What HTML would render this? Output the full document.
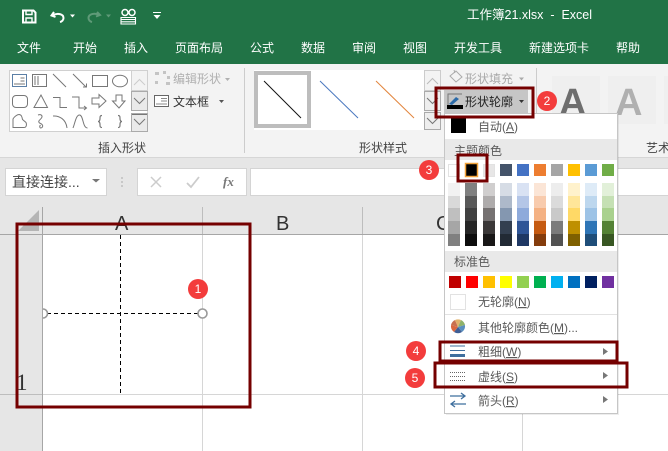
<!DOCTYPE html>
<html><head><meta charset="utf-8"><style>
html,body{margin:0;padding:0;background:#fff;width:668px;height:451px;overflow:hidden}
svg{display:block}
text{font-family:"Liberation Sans","Noto Sans CJK SC",sans-serif;font-size:12px;fill:#444}
.t text{fill:#fff}
.i{fill:none;stroke:#777;stroke-width:1}
</style></head><body>
<svg width="668" height="451" viewBox="0 0 668 451" xmlns="http://www.w3.org/2000/svg">
<rect width="668" height="451" fill="#fff"/>
<rect width="668" height="64" fill="#217346"/>
<rect y="64" width="668" height="93" fill="#f3f3f3"/>
<rect y="157" width="668" height="50" fill="#e6e6e6"/>
<rect y="157" width="668" height="1" fill="#d6d6d6"/>
<rect y="207" width="668" height="27" fill="#e6e6e6"/>
<rect y="207" width="42" height="244" fill="#e6e6e6"/>
<!-- QAT -->
<g fill="none" stroke="#fff">
<path d="M23 10.500h10.500l2 2V22.500H23z" stroke-width="2"/>
<path d="M26 11v3.500h6V11M26 22v-4h6v4" stroke-width="1.400"/>
<path d="M54 12l-2.500 3.500 4 1.500M52.500 15.500c5-3 11-1.500 11 2.500 0 2-1.500 3.500-3.500 4" stroke-width="2"/>
<path d="M97 12l3 3-4 1.500M99.500 15c-5-2.500-11-1-11 3 0 2 1.500 3.500 3.500 4" stroke="#5f9a78" stroke-width="2"/>
<path d="M121 17.500h14.500V24H121zM121 19.500h14M121 21.800h14" stroke-width="1.100"/>
<circle cx="125" cy="12.500" r="3" stroke-width="1.500"/><circle cx="132" cy="12.500" r="3" stroke-width="1.500"/>
<path d="M153 12.500h8" stroke-width="1"/>
</g>
<path d="M70 14.500h5l-2.500 3zM153.500 15h7l-3.500 4z" fill="#fff"/>
<path d="M106 14.500h5l-2.500 3z" fill="#5f9a78"/>
<g class="t">
<text x="467" y="19" style="font-size:12.500px">工作簿21.xlsx &#160;- &#160;Excel</text>
<text x="17" y="52">文件</text><text x="73" y="52">开始</text><text x="124" y="52">插入</text>
<text x="175" y="52">页面布局</text><text x="250" y="52">公式</text><text x="301" y="52">数据</text>
<text x="352" y="52">审阅</text><text x="403" y="52">视图</text><text x="454" y="52">开发工具</text>
<text x="529" y="52">新建选项卡</text><text x="616" y="52">帮助</text>
</g>
<!-- Insert-shape gallery -->
<rect x="9.500" y="70.500" width="138" height="61" fill="#fff" stroke="#d0d0d0"/>
<rect x="131.500" y="70.500" width="16" height="20" fill="#f3f3f3" stroke="#d0d0d0"/>
<rect x="131.500" y="91.500" width="16" height="19" fill="#eaeaea" stroke="#aaa"/>
<rect x="131.500" y="113.500" width="16" height="18" fill="#eaeaea" stroke="#aaa"/>
<path class="i" d="M134 85l5.500-5.500 5.500 5.500" style="stroke:#ccc"/>
<path class="i" d="M134 98l5.500 5.500 5.500-5.500M132 114.500h15M134 119l5.500 5.500 5.500-5.500"/>
<g class="i">
<rect x="12.500" y="74.500" width="14" height="12" style="stroke:#5b7fa6"/>
<path d="M20.500 78h4M20.500 81h4M14 84h11"/>
<rect x="32.500" y="74.500" width="14" height="12"/>
<path d="M35 76v9M38 76v9"/>
<path d="M53 74l13 13M73 74l13 13M83 87h3.500v-3.500"/>
<rect x="92.500" y="75.500" width="15" height="11"/>
<ellipse cx="120" cy="81" rx="7.500" ry="5.800"/>
<rect x="12.500" y="95.500" width="15" height="12" rx="3.500"/>
<path d="M41 95l-7 12.500h13.500z"/>
<path d="M53 97.500h7v10h7"/>
<path d="M72 97h7v11h7M84 106l2.500 2-2.500 2"/>
<path d="M92 98h7v-3.500l7 6.500-7 6.500V104h-7z"/>
<path d="M116 95h6v6h3l-6 7-6.500-7h3.500z"/>
<path d="M13 127.500v-8.500c1-2 4-4.500 6-4.500 2.500 0 3 2.500 3.500 5l3.500 3c1 2 .5 5-2 5z"/>
<path d="M38 115c3-1 5 .5 3.500 3-1.500 2-4 3-2 5 3 1 4 3 2.500 4.500-2 1.500-3-1-1.500-2.500"/>
<path d="M53 116c6-.5 13 3 14 12"/>
<path d="M73 128c2-5 3-13 6.500-13 4 0 3 13 8 13"/>
<path d="M102 115.500c-2 0-2 1-2 3 0 1.500-.5 3-2 3 1.500 0 2 1.500 2 3 0 2 0 3 2 3" stroke-width="1.200"/>
<path d="M118 115.500c2 0 2 1 2 3 0 1.500.5 3 2 3-1.500 0-2 1.500-2 3 0 2 0 3-2 3" stroke-width="1.200"/>
</g>
<!-- edit / text box -->
<g fill="#c4c4c4"><rect x="155" y="72" width="4" height="3"/><rect x="163" y="71" width="3" height="3"/><rect x="167" y="76" width="3" height="3"/><rect x="155" y="81" width="3" height="3"/><rect x="166" y="82" width="4" height="3"/></g>
<text x="173" y="83" style="fill:#b0b0b0">编辑形状</text><path d="M225 78h5l-2.500 3z" fill="#b0b0b0"/>
<rect x="154.500" y="95.500" width="14" height="11" fill="#fff" stroke="#666"/>
<path d="M161 98.500h6M161 101h6M156 104h11" stroke="#888" fill="none"/>
<text x="173" y="106" style="fill:#333">文本框</text><path d="M219 100h5l-2.500 3z" fill="#555"/>
<text x="98" y="152">插入形状</text>
<rect x="244" y="68" width="1" height="85" fill="#ccc"/>
<!-- Shape style gallery -->
<rect x="254" y="70" width="170" height="60" fill="#fff"/>
<rect x="256" y="73" width="53" height="53" fill="#fff" stroke="#bdbdbd" stroke-width="4"/>
<path d="M264 81l37 37" stroke="#111" fill="none"/>
<path d="M320 81l38 37" stroke="#4a78bf" fill="none"/>
<path d="M376 81l38 37" stroke="#e2853d" fill="none"/>
<rect x="424.500" y="70.500" width="16" height="20" fill="#f3f3f3" stroke="#ccc"/>
<rect x="424.500" y="91.500" width="16" height="19" fill="#eee" stroke="#aaa"/>
<rect x="424.500" y="112.500" width="16" height="17" fill="#eee" stroke="#aaa"/>
<path class="i" d="M427 84l5.500-5.500 5.500 5.500" style="stroke:#bbb"/>
<path class="i" d="M427 98l5.500 5.500 5.500-5.500M427 118l5.500 5.500 5.500-5.500"/>
<text x="359" y="152">形状样式</text>
<text x="465" y="83" style="fill:#aaa">形状填充</text><path d="M519 77.500h5l-2.500 3z" fill="#aaa"/>
<path d="M450 76l6-5 6 6-6 5zM454 70l1 3" stroke="#aaa" fill="none"/>
<rect x="444" y="90" width="84" height="24" fill="#c6c6c6"/>
<path d="M448 106V94h14" stroke="#777" fill="none"/><path d="M449 104l7-7 3 2-7 6z" fill="#2b6aa8"/>
<rect x="447" y="105" width="16" height="4" fill="#000"/>
<text x="465" y="106" style="fill:#222">形状轮廓</text><path d="M519 100h5l-2.500 3z" fill="#333"/>
<rect x="536" y="68" width="1" height="85" fill="#ccc"/>
<!-- WordArt -->
<rect x="552" y="76" width="48" height="48" fill="#efefef"/><rect x="608" y="76" width="48" height="48" fill="#efefef"/><rect x="664" y="76" width="4" height="48" fill="#efefef"/>
<text x="559" y="115" style="font-size:38px;fill:#6e6e6e;font-weight:bold">A</text>
<text x="615" y="115" style="font-size:38px;fill:#b0b0b0;font-weight:bold">A</text>
<text x="646" y="152" style="fill:#444">艺术</text>
<!-- Formula bar -->
<rect x="5.500" y="168.500" width="101" height="27" fill="#fff" stroke="#d4d4d4"/>
<text x="12" y="187" style="font-size:14px;fill:#444">直接连接...</text><path d="M92 179h8l-4 3.500z" fill="#777"/>
<path d="M122 177v2M122 181v2M122 185v2" stroke="#aaa" fill="none"/>
<rect x="137.500" y="168.500" width="109" height="27" fill="#fff" stroke="#d4d4d4"/>
<path d="M151 177l10 10M161 177l-10 10" stroke="#ccc" stroke-width="1.500" fill="none"/>
<path d="M187 183l4 4 8-10" stroke="#ccc" stroke-width="1.800" fill="none"/>
<text x="223" y="186" style="font-family:'Liberation Serif',serif;font-size:13px;font-style:italic;font-weight:bold;fill:#777">fx</text>
<rect x="250.500" y="168.500" width="420" height="27" fill="#fff" stroke="#d4d4d4"/>
<!-- Sheet -->
<path d="M39 210v21H18z" fill="#b5b5b5"/>
<path d="M42.500 207V451" stroke="#a6a6a6" fill="none"/>
<path d="M202.500 207v27M362.500 207v27M522.500 207v27" stroke="#bdbdbd" fill="none"/>
<path d="M0 234.500H668" stroke="#a6a6a6" fill="none"/>
<path d="M202.500 235V451M362.500 235V451M522.500 235V451M43 394.500H668" stroke="#d6d6d6" fill="none"/>
<path d="M0 394.500H42" stroke="#bdbdbd" fill="none"/>
<text x="115" y="230" style="font-size:20px;fill:#333">A</text>
<text x="276" y="230" style="font-size:20px;fill:#333">B</text>
<text x="436" y="230" style="font-size:20px;fill:#333">C</text>
<text x="16" y="390" style="font-family:'Liberation Serif',serif;font-size:23px;fill:#333">1</text>
<path d="M120.500 235V394" stroke="#000" stroke-dasharray="4 3" fill="none"/>
<path d="M47 313.500H198" stroke="#000" stroke-dasharray="4 3" fill="none"/>
<circle cx="202.500" cy="313.500" r="4.500" fill="#fff" stroke="#999" stroke-width="1.600"/>
<path d="M43 309a4.500 4.500 0 0 1 0 9" fill="#fff" stroke="#999" stroke-width="1.600"/>
<!-- Menu -->
<rect x="446" y="115" width="173" height="300" fill="#000" opacity=".07"/>
<rect x="444.500" y="113.500" width="173" height="300" fill="#fff" stroke="#c6c6c6"/>
<rect x="451" y="118" width="15" height="15" fill="#000"/>
<text x="478" y="131" style="fill:#5a5a5a">自动(<tspan text-decoration="underline">A</tspan>)</text>
<rect x="445" y="139" width="172" height="21" fill="#e9e9e9"/>
<text x="454" y="155" style="fill:#5a5a5a">主题颜色</text>
<g stroke="#e2e2e2"><rect x="448.500" y="164.500" width="11" height="12" fill="#fff"/>
<rect x="483.500" y="164.500" width="11" height="12" fill="#e7e6e6"/></g>
<rect x="465.500" y="163.500" width="12" height="13" fill="#000" stroke="#f2a33a" stroke-width="1.500"/>
<rect x="500" y="164" width="12" height="12" fill="#44546a"/><rect x="517" y="164" width="12" height="12" fill="#4472c4"/>
<rect x="534" y="164" width="12" height="12" fill="#ed7d31"/><rect x="551" y="164" width="12" height="12" fill="#a5a5a5"/>
<rect x="568" y="164" width="12" height="12" fill="#ffc000"/><rect x="585" y="164" width="12" height="12" fill="#5b9bd5"/>
<rect x="602" y="164" width="12" height="12" fill="#70ad47"/>
<g>
<rect x="448" y="183" width="12" height="13" fill="#f2f2f2"/><rect x="448" y="196" width="12" height="12" fill="#d9d9d9"/><rect x="448" y="208" width="12" height="13" fill="#bfbfbf"/><rect x="448" y="221" width="12" height="13" fill="#a6a6a6"/><rect x="448" y="234" width="12" height="12" fill="#808080"/>
<rect x="465" y="183" width="12" height="13" fill="#808080"/><rect x="465" y="196" width="12" height="12" fill="#595959"/><rect x="465" y="208" width="12" height="13" fill="#404040"/><rect x="465" y="221" width="12" height="13" fill="#262626"/><rect x="465" y="234" width="12" height="12" fill="#0d0d0d"/>
<rect x="483" y="183" width="12" height="13" fill="#d0cece"/><rect x="483" y="196" width="12" height="12" fill="#aeabab"/><rect x="483" y="208" width="12" height="13" fill="#757171"/><rect x="483" y="221" width="12" height="13" fill="#3b3838"/><rect x="483" y="234" width="12" height="12" fill="#181717"/>
<rect x="500" y="183" width="12" height="13" fill="#d6dce5"/><rect x="500" y="196" width="12" height="12" fill="#adb9ca"/><rect x="500" y="208" width="12" height="13" fill="#8497b0"/><rect x="500" y="221" width="12" height="13" fill="#333f50"/><rect x="500" y="234" width="12" height="12" fill="#222a35"/>
<rect x="517" y="183" width="12" height="13" fill="#d9e2f3"/><rect x="517" y="196" width="12" height="12" fill="#b4c6e7"/><rect x="517" y="208" width="12" height="13" fill="#8eaadb"/><rect x="517" y="221" width="12" height="13" fill="#2f5597"/><rect x="517" y="234" width="12" height="12" fill="#1f3864"/>
<rect x="534" y="183" width="12" height="13" fill="#fbe5d6"/><rect x="534" y="196" width="12" height="12" fill="#f8cbad"/><rect x="534" y="208" width="12" height="13" fill="#f4b183"/><rect x="534" y="221" width="12" height="13" fill="#c55a11"/><rect x="534" y="234" width="12" height="12" fill="#843c0c"/>
<rect x="551" y="183" width="12" height="13" fill="#ededed"/><rect x="551" y="196" width="12" height="12" fill="#dbdbdb"/><rect x="551" y="208" width="12" height="13" fill="#c9c9c9"/><rect x="551" y="221" width="12" height="13" fill="#7b7b7b"/><rect x="551" y="234" width="12" height="12" fill="#525252"/>
<rect x="568" y="183" width="12" height="13" fill="#fff2cc"/><rect x="568" y="196" width="12" height="12" fill="#ffe699"/><rect x="568" y="208" width="12" height="13" fill="#ffd966"/><rect x="568" y="221" width="12" height="13" fill="#bf9000"/><rect x="568" y="234" width="12" height="12" fill="#7f6000"/>
<rect x="585" y="183" width="12" height="13" fill="#deebf7"/><rect x="585" y="196" width="12" height="12" fill="#bdd7ee"/><rect x="585" y="208" width="12" height="13" fill="#9dc3e6"/><rect x="585" y="221" width="12" height="13" fill="#2e75b6"/><rect x="585" y="234" width="12" height="12" fill="#1f4e79"/>
<rect x="602" y="183" width="12" height="13" fill="#e2f0d9"/><rect x="602" y="196" width="12" height="12" fill="#c5e0b4"/><rect x="602" y="208" width="12" height="13" fill="#a9d18e"/><rect x="602" y="221" width="12" height="13" fill="#548235"/><rect x="602" y="234" width="12" height="12" fill="#385723"/>
</g>
<rect x="445" y="251" width="172" height="21" fill="#e9e9e9"/>
<text x="454" y="266" style="fill:#5a5a5a">标准色</text>
<rect x="449" y="276" width="12" height="12" fill="#c00000"/><rect x="466" y="276" width="12" height="12" fill="#ff0000"/><rect x="483" y="276" width="12" height="12" fill="#ffc000"/><rect x="500" y="276" width="12" height="12" fill="#ffff00"/><rect x="517" y="276" width="12" height="12" fill="#92d050"/><rect x="534" y="276" width="12" height="12" fill="#00b050"/><rect x="551" y="276" width="12" height="12" fill="#00b0f0"/><rect x="568" y="276" width="12" height="12" fill="#0070c0"/><rect x="585" y="276" width="12" height="12" fill="#002060"/><rect x="602" y="276" width="12" height="12" fill="#7030a0"/>
<rect x="450.500" y="294.500" width="15" height="15" fill="#fff" stroke="#e2e2e2"/>
<text x="478" y="306" style="fill:#5a5a5a">无轮廓(<tspan text-decoration="underline">N</tspan>)</text>
<rect x="445" y="314" width="172" height="1" fill="#e2e2e2"/>
<!-- colour wheel -->
<path d="M458 327l-7-2a7.500 7.500 0 0 1 4-5z" fill="#c8704f"/>
<path d="M458 327l-3-7a7.500 7.500 0 0 1 6 0z" fill="#e2b16a"/>
<path d="M458 327l3-7a7.500 7.500 0 0 1 4 5z" fill="#8fb26a"/>
<path d="M458 327l7-2a7.500 7.500 0 0 1-3 7z" fill="#5a8fbf"/>
<path d="M458 327l4 5a7.500 7.500 0 0 1-8 0z" fill="#3f5f96"/>
<path d="M458 327l-4 5a7.500 7.500 0 0 1-3-7z" fill="#d9673f"/>
<text x="478" y="332" style="fill:#5a5a5a">其他轮廓颜色(<tspan text-decoration="underline">M</tspan>)...</text>
<path d="M450 346h15M450 350.500h15" stroke="#3f6f9e" fill="none"/><rect x="450" y="354" width="15" height="3" fill="#3f6f9e"/>
<text x="478" y="356" style="fill:#5a5a5a">粗细(<tspan text-decoration="underline">W</tspan>)</text>
<path d="M603 348l5 3.500-5 3.500z" fill="#777"/>
<path d="M450 372.500h15M450 376.500h15M450 380.500h15" stroke="#666" stroke-dasharray="1 1" fill="none"/>
<text x="478" y="381" style="fill:#5a5a5a">虚线(<tspan text-decoration="underline">S</tspan>)</text>
<path d="M603 372l5 3.500-5 3.500z" fill="#777"/>
<path d="M450 396h15M461 393l4 3-4 3M466 404h-15M455 401l-4 3 4 3" stroke="#3f6f9e" stroke-width="1.300" fill="none"/>
<text x="478" y="405" style="fill:#5a5a5a">箭头(<tspan text-decoration="underline">R</tspan>)</text>
<path d="M603 396l5 3.500-5 3.500z" fill="#777"/>
<!-- Annotations -->
<g fill="none" stroke="#750000" stroke-width="3">
<rect x="17" y="224" width="233" height="183"/>
<rect x="436" y="88" width="97" height="29"/>
<rect x="458" y="155" width="29" height="26"/>
<rect x="440" y="342" width="177" height="19"/>
<rect x="435" y="363" width="192" height="24"/>
</g>
<g fill="#f33c3c"><circle cx="198" cy="289" r="10"/><circle cx="547" cy="101" r="10"/><circle cx="429" cy="170" r="10"/><circle cx="416" cy="351" r="10"/><circle cx="415" cy="378" r="10"/></g>
<g text-anchor="middle">
<text x="198" y="293" style="fill:#fff">1</text><text x="547" y="105" style="fill:#fff">2</text><text x="429" y="174" style="fill:#fff">3</text><text x="416" y="355" style="fill:#fff">4</text><text x="415" y="382" style="fill:#fff">5</text>
</g>
</svg>
</body></html>
